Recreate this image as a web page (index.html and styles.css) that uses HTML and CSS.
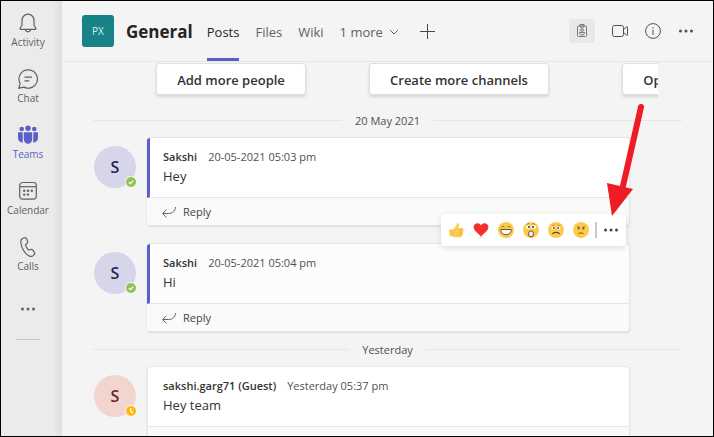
FILE: index.html
```html
<!DOCTYPE html>
<html lang="en">
<head>
    <meta charset="UTF-8">
    <meta name="viewport" content="width=device-width, initial-scale=1.0">
    <title>General | Teams</title>
    <link rel="stylesheet" href="styles.css">
</head>
<body>
    <!-- Shared icons -->
    <svg class="defs" aria-hidden="true">
        <symbol id="dots" viewBox="0 0 16 16">
            <circle cx="2.5" cy="8" r="1.5"/><circle cx="8" cy="8" r="1.5"/><circle cx="13.5" cy="8" r="1.5"/>
        </symbol>
        <symbol id="reply" viewBox="0 0 16 16">
            <path d="M14.5 3c-.3 4.300-3 6.500-7 6.500H2M5.500 5.700L1.600 9.500l3.900 4" fill="none" stroke="currentColor"/>
        </symbol>
        <symbol id="available" viewBox="0 0 12 12">
            <circle cx="6" cy="6" r="6" fill="#f5f5f5"/>
            <circle cx="6" cy="6" r="5" fill="#92c353"/>
            <path d="M3.800 6.200l1.500 1.500 3-3" fill="none" stroke="#fff" stroke-width="1.200"/>
        </symbol>
        <symbol id="away" viewBox="0 0 12 12">
            <circle cx="6" cy="6" r="6" fill="#f5f5f5"/>
            <circle cx="6" cy="6" r="5" fill="#fdb913"/>
            <path d="M5.800 3v3.400l2 1.600" fill="none" stroke="#fff" stroke-width="1.300"/>
        </symbol>
    </svg>

    <div class="app">
        <nav class="rail">
            <button class="rail-item">
                <svg class="rail-icon" viewBox="0 0 20 20"><path d="M10 1.200a6 6 0 0 0-6 6V12l-1.900 3.300c-.3.500 0 1 .6 1h14.600c.6 0 .9-.5.6-1L16 12V7.200a6 6 0 0 0-6-6zM7.300 16.500c.3 1.600 1.300 2.300 2.700 2.300s2.400-.7 2.700-2.300"/></svg>
                <span>Activity</span>
            </button>
            <button class="rail-item">
                <svg class="rail-icon" viewBox="0 0 20 20"><path d="M10.200.8a9.200 9.200 0 1 1-4.300 17.300L.8 19.200l1.300-4.800A9.200 9.200 0 0 1 10.200.8zM6.500 8.200h7.500M6.500 11.800h4.800"/></svg>
                <span>Chat</span>
            </button>
            <button class="rail-item active">
                <svg class="rail-icon solid" viewBox="0 0 20 20">
                    <circle cx="3.700" cy="4" r="2.300"/><circle cx="10" cy="3.200" r="2.700"/><circle cx="16.300" cy="4" r="2.300"/>
                    <path d="M1 7.200h3.700v8c0 1 .2 1.600.5 2.300C2 17.500 0 15.700 0 13V8.200c0-.6.4-1 1-1zM6.800 7.200h6.400c.6 0 1 .4 1 1V14c0 3-1.900 4.700-4.200 4.700S5.800 17 5.800 14V8.200c0-.6.4-1 1-1zM15.300 7.200H19c.6 0 1 .4 1 1V13c0 2.700-2 4.500-5.200 4.500.3-.7.5-1.300.5-2.300z"/>
                </svg>
                <span>Teams</span>
            </button>
            <button class="rail-item">
                <svg class="rail-icon" viewBox="0 0 20 20">
                    <rect x="1.700" y="1.500" width="16.600" height="16.600" rx="2.800"/><path d="M2 5.700h16"/>
                    <g class="fill"><circle cx="6.200" cy="9.800" r="1.200"/><circle cx="10" cy="9.800" r="1.200"/><circle cx="13.800" cy="9.800" r="1.200"/><circle cx="6.200" cy="13.600" r="1.200"/><circle cx="10" cy="13.600" r="1.200"/></g>
                </svg>
                <span>Calendar</span>
            </button>
            <button class="rail-item">
                <svg class="rail-icon" viewBox="0 0 20 20"><path d="M5 1.200l1.300-.4c1-.3 2 .2 2.400 1.200l.8 2.200c.3.900.1 1.700-.6 2.300L7.500 7.900c.4 1.900 1.700 4 3.200 5.200l1.900-.6c.8-.2 1.600 0 2.100.7l1.500 2c.6.800.5 1.900-.2 2.500l-.9.900c-1 .9-2.400 1-3.600.5C7 17.200 3.500 11.200 2.800 5.500 2.700 3.500 3.300 1.800 5 1.200z"/></svg>
                <span>Calls</span>
            </button>
            <button class="rail-item more" aria-label="More apps">
                <svg class="rail-icon solid"><use href="#dots"/></svg>
            </button>
            <hr class="rail-line">
        </nav>

        <main class="main">
            <header class="header">
                <div class="team-logo">PX</div>
                <h1 class="title">General</h1>
                <nav class="tabs">
                    <a class="tab selected" href="#posts">Posts</a>
                    <a class="tab" href="#files">Files</a>
                    <a class="tab" href="#wiki">Wiki</a>
                    <button class="tab">1 more
                        <svg class="chevron" viewBox="0 0 10 10"><path d="M1 3l4 4 4-4"/></svg>
                    </button>
                </nav>
                <button class="add-tab" aria-label="Add a tab">
                    <svg viewBox="0 0 16 16"><path d="M8.500 1v15M1 8.500h15"/></svg>
                </button>
                <div class="actions">
                    <button class="action boxed" aria-label="Badge">
                        <svg viewBox="0 0 16 16"><rect x="3.500" y="3" width="9" height="10.500" rx="1"/><path d="M6 3V1.500h4V4H6z"/><circle cx="8" cy="7" r="1.400"/><path d="M5.500 9.500h5c0 1.600-1 2.500-2.500 2.500s-2.500-.9-2.500-2.500z"/></svg>
                    </button>
                    <button class="action" aria-label="Meet">
                        <svg viewBox="0 0 16 16"><rect x=".5" y="2.500" width="11" height="11" rx="2"/><path d="M11.500 6.500l3.200-2.700c.4-.3.800-.1.800.4v7.600c0 .5-.4.700-.8.400l-3.200-2.700"/></svg>
                    </button>
                    <button class="action" aria-label="Channel info">
                        <svg viewBox="0 0 16 16"><circle cx="8" cy="8" r="7.400"/><path d="M8 6.800V12M8 4v1.500"/></svg>
                    </button>
                    <button class="action dots" aria-label="More options">
                        <svg><use href="#dots"/></svg>
                    </button>
                </div>
            </header>

            <div class="feed">
                <div class="starters">
                    <button class="starter">Add more people</button>
                    <button class="starter">Create more channels</button>
                    <button class="starter">Open the FAQ</button>
                </div>

                <div class="day">20 May 2021</div>

                <article class="post">
                    <div class="avatar">S<svg class="status"><use href="#available"/></svg></div>
                    <div class="card own">
                        <div class="message">
                            <div class="meta"><b class="author">Sakshi</b><time>20-05-2021 05:03 pm</time></div>
                            <p class="text">Hey</p>
                        </div>
                        <button class="reply"><svg><use href="#reply"/></svg>Reply</button>
                    </div>
                </article>

                <article class="post">
                    <div class="avatar">S<svg class="status"><use href="#available"/></svg></div>
                    <div class="card own hovered">
                        <div class="message">
                            <div class="meta"><b class="author">Sakshi</b><time>20-05-2021 05:04 pm</time></div>
                            <p class="text">Hi</p>
                        </div>
                        <button class="reply"><svg><use href="#reply"/></svg>Reply</button>

                        <div class="reactions">
                            <button class="reaction" aria-label="Like">
                                <svg viewBox="0 0 16 16"><path d="M1 8.500c0-.6.3-.9.900-.9h2.600C6.500 6.500 8 4.700 8.800 2c.3-1.200 2.300-1.200 2.300.6 0 1.200-.3 2.300-.8 3.400h3.900c1.500 0 1.700 1.500.9 2 .7.600.5 1.700-.1 2 .5.700.2 1.600-.4 1.900.3.900-.1 1.600-.8 1.800-.1 1-.8 1.500-1.700 1.500H7.500c-1.200 0-2-.5-2.800-1H2.600c-.7 0-1.100-.4-1.200-1z" fill="#fccb4f"/><path d="M10.800 8h3.700M11 10.200h3.400M10.800 12.300h3M4.800 8.200c-.5 1.800-.4 4 .3 5.800" fill="none" stroke="#e8a63d" stroke-width=".8"/></svg>
                            </button>
                            <button class="reaction" aria-label="Heart">
                                <svg viewBox="0 0 16 16"><ellipse cx="8" cy="15.300" rx="2.500" ry=".6" fill="#f8c9c8"/><path d="M8 14.800C6.500 12 .6 9.200.6 5c0-4.200 5.500-5.200 7.400-1.800C9.900-.2 15.400.8 15.400 5c0 4.200-5.900 7-7.400 9.800z" fill="#f4302f"/></svg>
                            </button>
                            <button class="reaction" aria-label="Laugh">
                                <svg viewBox="0 0 16 16"><circle cx="8" cy="8" r="8" fill="#fdcb4b"/><path d="M3.300 5.200c.8-1.200 2.500-1.200 3.300 0M9.400 5.200c.8-1.200 2.500-1.200 3.300 0" fill="none" stroke="#8a6424" stroke-width=".9"/><path d="M2.700 7.500h10.600c0 3.400-2.200 5.300-5.300 5.300S2.700 10.900 2.700 7.500z" fill="#fff" stroke="#5c4521" stroke-width=".9"/></svg>
                            </button>
                            <button class="reaction" aria-label="Surprised">
                                <svg viewBox="0 0 16 16"><circle cx="8" cy="8" r="8" fill="#fdcb4b"/><path d="M4 2.500L5.800 1.400M12 2.500l-1.800-1.100" stroke="#8a6424"/><ellipse cx="5.400" cy="4.900" rx="2.400" ry="2" fill="#fff"/><ellipse cx="10.600" cy="4.900" rx="2.400" ry="2" fill="#fff"/><circle cx="6" cy="5" r="1" fill="#303030"/><circle cx="10" cy="5" r="1" fill="#303030"/><ellipse cx="8" cy="11.800" rx="2.500" ry="3" fill="#f7f0e6" stroke="#6b5130"/></svg>
                            </button>
                            <button class="reaction" aria-label="Sad">
                                <svg viewBox="0 0 16 16"><circle cx="8" cy="8" r="8" fill="#fdcb4b"/><path d="M3.700 4L6.500 2.600M12.300 4L9.500 2.600" stroke="#a97b2c" stroke-width=".8"/><ellipse cx="5.400" cy="6" rx="1.900" ry="1.500" fill="#fff"/><ellipse cx="10.600" cy="6" rx="1.900" ry="1.500" fill="#fff"/><circle cx="5.800" cy="6.100" r="1" fill="#4d5a70"/><circle cx="10.200" cy="6.100" r="1" fill="#4d5a70"/><path d="M4.300 11.900c1.500-2 5.900-2 7.400 0" fill="none" stroke="#5c4521" stroke-width="1.200"/></svg>
                            </button>
                            <button class="reaction" aria-label="Angry">
                                <svg viewBox="0 0 16 16"><circle cx="8" cy="8" r="8" fill="#fdcb4b"/><path d="M4 4.800l3 .6M12 4.800l-3 .6" stroke="#87622b" stroke-width=".9"/><circle cx="5.600" cy="6.400" r="1" fill="#6c5231"/><circle cx="10.400" cy="6.400" r="1" fill="#6c5231"/><path d="M5.500 11.800c1-1.300 4-1.300 5 0" fill="none" stroke="#a67327" stroke-width="1.200"/></svg>
                            </button>
                            <button class="reaction options" aria-label="More options">
                                <svg><use href="#dots"/></svg>
                            </button>
                            <svg class="pointer" viewBox="0 0 46 116" aria-hidden="true"><path d="M41 5L23 84" stroke="#ee1c25" stroke-width="6" stroke-linecap="round"/><path d="M12 114L7 81l26 6z" fill="#ee1c25"/></svg>
                        </div>
                    </div>
                </article>

                <div class="day">Yesterday</div>

                <article class="post">
                    <div class="avatar guest">S<svg class="status"><use href="#away"/></svg></div>
                    <div class="card">
                        <div class="message">
                            <div class="meta"><b class="author">sakshi.garg71 (Guest)</b><time>Yesterday 05:37 pm</time></div>
                            <p class="text">Hey team</p>
                        </div>
                        <button class="reply" aria-label="Reply"></button>
                    </div>
                </article>
            </div>
        </main>
    </div>
</body>
</html>
```
FILE: styles.css
```css
* {
    margin: 0;
    padding: 0;
    box-sizing: border-box;
}

body {
    background-color: #f4f4f4;
    color: #333;
    font-family: 'Open Sans', 'Noto Sans', sans-serif;
    font-size: 11px;
    overflow: hidden;
}

button {
    font: inherit;
    color: inherit;
    background: none;
    border: none;
    cursor: pointer;
}

a {
    color: inherit;
    text-decoration: none;
}

svg {
    display: block;
}

.defs {
    display: none;
}

.app {
    display: flex;
    height: 100vh;
    border: 1px solid #000;
}

/* Left rail */
.rail {
    width: 61px;
    flex-shrink: 0;
    padding-right: 7px;
    background: linear-gradient(to right, #ebebeb 52px, #dedede);
    color: #616161;
}

.rail-item {
    display: flex;
    flex-direction: column;
    align-items: center;
    gap: 1px;
    width: 100%;
    height: 56px;
    padding-top: 12px;
    font-size: 10px;
    line-height: 16px;
}

.rail-item.active {
    color: #5b5fc7;
}

.rail-item.more {
    justify-content: center;
    padding: 0;
}

.rail-icon {
    width: 20px;
    height: 20px;
    fill: none;
    stroke: currentColor;
    stroke-width: 1.2;
}

.rail-icon.solid,
.rail-icon .fill {
    fill: currentColor;
    stroke: none;
}

.rail-item.more .rail-icon {
    width: 16px;
    height: 16px;
}

.rail-line {
    width: 24px;
    margin: 2px auto;
    border: none;
    border-top: 1px solid #c8c8c8;
}

/* Channel header */
.main {
    flex: 1;
    min-width: 0;
    display: flex;
    flex-direction: column;
}

.header {
    display: flex;
    align-items: center;
    height: 61px;
    flex-shrink: 0;
    padding: 0 19px 0 20px;
    border-bottom: 1px solid #e6e6e6;
}

.team-logo {
    width: 32px;
    height: 32px;
    border-radius: 3px;
    background: #188387;
    color: #d8f0f0;
    font-size: 10px;
    line-height: 32px;
    text-align: center;
}

.title {
    margin: 0 14px 0 12px;
    color: #242424;
    font-size: 17px;
    font-weight: 700;
}

.tabs {
    display: flex;
    align-self: stretch;
    gap: 16px;
    color: #616161;
    font-size: 13px;
}

.tab {
    display: flex;
    align-items: center;
    gap: 6px;
    padding-top: 5px;
    border-bottom: 3px solid transparent;
    white-space: nowrap;
}

.tab.selected {
    color: #242424;
    border-color: #5b5fc7;
}

.chevron {
    width: 10px;
    height: 10px;
    fill: none;
    stroke: #616161;
}

.add-tab {
    margin-left: 20px;
}

.add-tab svg {
    width: 16px;
    height: 16px;
    stroke: #484848;
}

.actions {
    display: flex;
    align-items: center;
    gap: 17px;
    margin-left: auto;
    color: #505050;
}

.action svg {
    width: 16px;
    height: 16px;
    fill: none;
    stroke: currentColor;
}

.action.boxed {
    padding: 4px 5px;
    border-radius: 3px;
    background: #e8e8e8;
    color: #777;
}

.action.dots svg {
    fill: currentColor;
    stroke: none;
}

/* Feed */
.feed {
    flex: 1;
    min-height: 0;
    overflow: hidden;
    padding: 0 31px;
}

.starters {
    display: grid;
    grid-template-columns: repeat(3, 228px);
    justify-items: center;
    margin: 0 24px;
    padding: 1px 0 11px;
    overflow: hidden;
}

.starter {
    height: 32px;
    padding: 1px 20px 0;
    border: 1px solid #e0e0e0;
    border-radius: 3px;
    background: #fff;
    box-shadow: 0 2px 3px rgba(0, 0, 0, 0.12);
    color: #333;
    font-size: 13px;
    font-weight: 600;
}

.day {
    display: flex;
    align-items: center;
    gap: 13px;
    height: 28px;
    color: #505050;
}

.day::before,
.day::after {
    content: "";
    flex: 1;
    border-top: 1px solid #e6e6e6;
}

.post {
    display: flex;
    gap: 11px;
    margin: 3px 52px 17px 1px;
}

.post:has(+ .day) {
    margin-bottom: 3px;
}

.avatar {
    position: relative;
    width: 42px;
    height: 42px;
    margin-top: 9px;
    flex-shrink: 0;
    border-radius: 50%;
    background: #d7d5e9;
    color: #272450;
    font-size: 16px;
    font-weight: 600;
    line-height: 42px;
    text-align: center;
}

.avatar.guest {
    background: #f2d5ce;
    color: #6b2519;
}

.status {
    position: absolute;
    right: -1px;
    bottom: 0;
    width: 12px;
    height: 12px;
}

.card {
    position: relative;
    flex: 1;
    border: 1px solid #e6e6e6;
    border-radius: 4px;
    background: #fff;
    box-shadow: 0 1px 2px rgba(0, 0, 0, 0.1);
}

.card.own {
    border-left: none;
}

.card.hovered {
    background: #fcfcfc;
}

.message {
    height: 60px;
    padding: 10px 15px;
    border-bottom: 1px solid #e6e6e6;
}

.own .message {
    padding-left: 13px;
    border-left: 3px solid #5b5fc7;
    border-top-left-radius: 3px;
}

.meta {
    display: flex;
    gap: 11px;
    line-height: 18px;
    color: #505050;
}

.author {
    color: #333;
    font-weight: 600;
}

.text {
    font-size: 13px;
    line-height: 20px;
}

.reply {
    display: flex;
    align-items: center;
    gap: 6px;
    width: 100%;
    height: 27px;
    padding-left: 14px;
    border-radius: 0 0 4px 4px;
    background: #fafafa;
    color: #424242;
}

.reply svg {
    width: 16px;
    height: 16px;
    color: #616161;
}

/* Reactions bar */
.reactions {
    position: absolute;
    top: -30px;
    right: 3px;
    display: flex;
    align-items: center;
    gap: 9px;
    height: 32px;
    padding: 0 7px;
    border-radius: 4px;
    background: #fff;
    box-shadow: 0 2px 6px rgba(0, 0, 0, 0.12);
}

.reaction svg {
    width: 16px;
    height: 16px;
}

.reaction.options {
    margin-left: -3px;
    padding-left: 6px;
    border-left: 2px solid #c8c8c8;
    color: #424242;
    fill: currentColor;
}

.pointer {
    position: absolute;
    right: -20px;
    bottom: 28px;
    width: 46px;
    height: 116px;
    pointer-events: none;
}
```
